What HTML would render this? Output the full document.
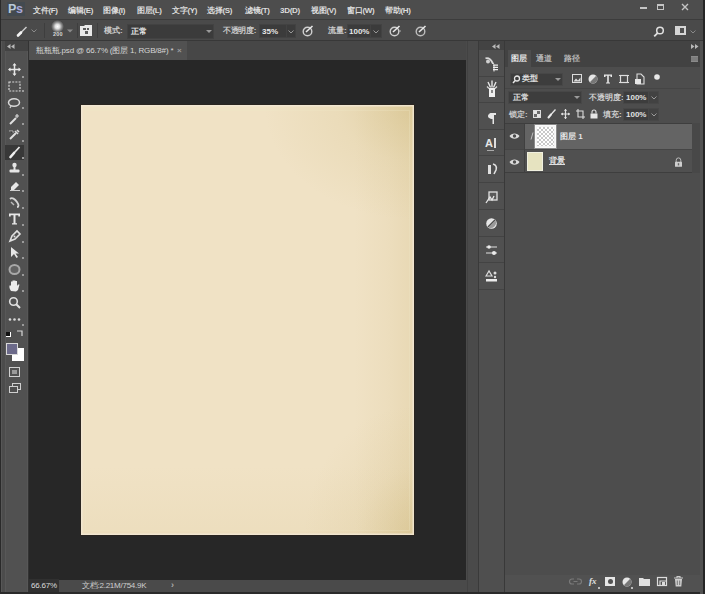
<!DOCTYPE html>
<html><head><meta charset="utf-8">
<style>
*{margin:0;padding:0;box-sizing:border-box}
html,body{width:705px;height:594px;overflow:hidden;background:#474747;font-family:"Liberation Sans",sans-serif;color:#cfcfcf;font-size:8px}
.a{position:absolute}
.t{position:absolute;white-space:nowrap;line-height:1;font-weight:bold}
svg{position:absolute;overflow:visible}
.mi{position:absolute;top:5.5px;font-size:8px;line-height:10px;color:#dcdcdc;white-space:nowrap;font-weight:bold;letter-spacing:-0.3px}
.box{position:absolute;background:#3b3b3b;border:1px solid #424242}
</style></head><body>
<!-- ===== MENU BAR ===== -->
<div class="a" style="left:0;top:0;width:705px;height:19px;background:#4d4d4d"></div>
<div class="a" style="left:0;top:19px;width:705px;height:1px;background:#3c3c3c"></div>
<div class="a" style="left:4px;top:2px;width:20px;height:16px;background:#1f3550;opacity:.0"></div>
<div class="a" style="left:7px;top:2px;width:18px;height:14px;background:#434a50"></div><div class="t" style="left:8px;top:3px;font-size:12.5px;font-weight:bold;color:#b8c8d8;letter-spacing:-0.3px">P<span style="color:#a8a8d8">s</span></div>
<div class="mi" style="left:33px">文件(F)</div>
<div class="mi" style="left:68px">编辑(E)</div>
<div class="mi" style="left:103px">图像(I)</div>
<div class="mi" style="left:137px">图层(L)</div>
<div class="mi" style="left:172px">文字(Y)</div>
<div class="mi" style="left:207px">选择(S)</div>
<div class="mi" style="left:245px">滤镜(T)</div>
<div class="mi" style="left:280px">3D(D)</div>
<div class="mi" style="left:311px">视图(V)</div>
<div class="mi" style="left:347px">窗口(W)</div>
<div class="mi" style="left:385px">帮助(H)</div>
<!-- window controls -->
<div class="a" style="left:640px;top:7px;width:7px;height:2px;background:#c4c4c4"></div>
<div class="a" style="left:657px;top:4px;width:7px;height:6px;border:1px solid #c4c4c4;border-top-width:2px"></div>
<svg style="left:681px;top:3px" width="8" height="8"><path d="M1 1L7 7M7 1L1 7" stroke="#c4c4c4" stroke-width="1.4"/></svg>

<!-- ===== OPTIONS BAR ===== -->
<div class="a" style="left:0;top:20px;width:705px;height:20px;background:#4a4a4a"></div>
<div class="a" style="left:0;top:40px;width:705px;height:1px;background:#383838"></div>
<!-- brush icon -->
<svg style="left:16px;top:26px" width="12" height="11"><path d="M10.5 1L5.5 6" stroke="#cfcfcf" stroke-width="1.5"/><path d="M5 6.5L2 9.5" stroke="#f4f4f4" stroke-width="2.6" stroke-linecap="round"/></svg>
<svg style="left:31px;top:29px" width="6" height="4"><path d="M0.5 0.5L3 3L5.5 0.5" stroke="#8a8a8a" fill="none"/></svg>
<div class="a" style="left:44px;top:23px;width:1px;height:15px;background:#3e3e3e"></div>
<div class="a" style="left:51px;top:20px;width:13px;height:13px;border-radius:50%;background:radial-gradient(circle at 50% 50%,#ffffff 0,#dddddd 25%,rgba(190,190,190,.55) 48%,rgba(74,74,74,0) 70%)"></div>
<div class="t" style="left:53px;top:32px;font-size:5.5px;font-weight:bold;color:#d8d8d8;letter-spacing:0.2px">200</div>
<svg style="left:67px;top:29px" width="6" height="4"><path d="M0 0.5H6L3 3.5Z" fill="#8a8a8a"/></svg>
<div class="a" style="left:77px;top:23px;width:1px;height:15px;background:#3e3e3e"></div>
<svg style="left:80px;top:25px" width="12" height="11"><path d="M0 1H4L5 0H12V11H0Z" fill="#e8e8e8"/><path d="M3 3H6V5H3ZM7 3H9V5H7ZM5 6H8V9H5Z" fill="#5a5a5a"/></svg>
<div class="a" style="left:97px;top:23px;width:1px;height:15px;background:#3e3e3e"></div>
<div class="t" style="left:104px;top:27px;color:#cacaca;font-weight:bold">模式:</div>
<div class="box" style="left:127px;top:24px;width:87px;height:15px"></div>
<div class="t" style="left:131px;top:28px;color:#e6e6e6;font-weight:bold">正常</div>
<svg style="left:206px;top:30px" width="6" height="4"><path d="M0 0H6L3 3Z" fill="#9a9a9a"/></svg>
<div class="t" style="left:223px;top:27px;color:#cacaca;font-weight:bold;letter-spacing:-0.3px">不透明度:</div>
<div class="box" style="left:259px;top:24px;width:28px;height:14px"></div>
<div class="box" style="left:286px;top:24px;width:10px;height:14px"></div>
<div class="t" style="left:262px;top:28px;color:#e6e6e6;font-size:8px">35%</div>
<svg style="left:288px;top:30px" width="6" height="4"><path d="M0.5 0.5L3 3L5.5 0.5" stroke="#9a9a9a" fill="none"/></svg>
<!-- pressure icon -->
<svg style="left:302px;top:25px" width="12" height="12"><circle cx="5.5" cy="6.5" r="4.3" stroke="#cfcfcf" stroke-width="1.4" fill="none"/><path d="M4 7L10.5 1" stroke="#e8e8e8" stroke-width="1.6"/></svg>
<div class="t" style="left:328px;top:27px;color:#cacaca;font-weight:bold">流量:</div>
<div class="box" style="left:347px;top:24px;width:24px;height:14px"></div>
<div class="box" style="left:370px;top:24px;width:12px;height:14px"></div>
<div class="t" style="left:349px;top:28px;color:#e6e6e6;font-size:8px">100%</div>
<svg style="left:373px;top:30px" width="6" height="4"><path d="M0.5 0.5L3 3L5.5 0.5" stroke="#9a9a9a" fill="none"/></svg>

<svg style="left:389px;top:25px" width="13" height="12"><circle cx="5.5" cy="6.5" r="4.3" stroke="#cfcfcf" stroke-width="1.4" fill="none"/><path d="M4 7L10.5 1" stroke="#e8e8e8" stroke-width="1.6"/><circle cx="11" cy="6" r="0.8" fill="#bbb"/></svg>

<svg style="left:415px;top:25px" width="12" height="12"><circle cx="5.5" cy="6.5" r="4.3" stroke="#bdbdbd" stroke-width="1.4" fill="none"/><path d="M4 7L10.5 1" stroke="#e8e8e8" stroke-width="1.6"/></svg>
<!-- right search/workspace -->
<svg style="left:653px;top:26px" width="12" height="12"><circle cx="7" cy="4.5" r="3.3" stroke="#e0e0e0" stroke-width="1.5" fill="none"/><path d="M4.8 6.8L1.2 10.4" stroke="#e0e0e0" stroke-width="1.8"/></svg>
<div class="a" style="left:675px;top:26px;width:11px;height:9px;border:2px solid #d6d6d6;background:#505050"></div>
<div class="a" style="left:677px;top:28px;width:3px;height:5px;background:#d6d6d6"></div>
<svg style="left:690px;top:30px" width="6" height="4"><path d="M0.5 0.5L3 3L5.5 0.5" stroke="#8a8a8a" fill="none"/></svg>

<!-- ===== LEFT FRAME + TOOLBAR ===== -->
<div class="a" style="left:0;top:0;width:1px;height:594px;background:#2a2a2a"></div>
<div class="a" style="left:1px;top:41px;width:4px;height:553px;background:#4c4c4c"></div>
<div class="a" style="left:1px;top:41px;width:1px;height:553px;background:#575757"></div>
<div class="a" style="left:5px;top:41px;width:23px;height:553px;background:#515151"></div>
<div class="a" style="left:5px;top:41px;width:1px;height:553px;background:#585858"></div>
<div class="a" style="left:27px;top:41px;width:1px;height:553px;background:#575757"></div>
<div class="a" style="left:5px;top:41px;width:23px;height:10px;background:#434343"></div>
<svg style="left:7px;top:44px" width="8" height="5"><path d="M0 2.5L3.5 0V5ZM4 2.5L7.5 0V5Z" fill="#b8b8b8"/></svg>
<div class="a" style="left:28px;top:41px;width:1px;height:553px;background:#333"></div>
<!-- selected brush highlight -->
<div class="a" style="left:5px;top:145px;width:19px;height:15px;background:#383838"></div>
<!-- tools -->
<svg style="left:8px;top:63px" width="13" height="13"><path d="M6.5 1V12M1 6.5H12" stroke="#e6e6e6" stroke-width="1.5"/><path d="M6.5 0L4.5 2.5H8.5ZM6.5 13L4.5 10.5H8.5ZM0 6.5L2.5 4.5V8.5ZM13 6.5L10.5 4.5V8.5Z" fill="#e6e6e6"/></svg>
<svg style="left:8px;top:81px" width="13" height="11"><rect x="1" y="1" width="11" height="9" stroke="#d8d8d8" stroke-width="1.2" stroke-dasharray="2 1.2" fill="none"/></svg>
<svg style="left:7px;top:97px" width="14" height="12"><ellipse cx="7" cy="5.5" rx="5.5" ry="3.8" stroke="#d8d8d8" stroke-width="1.5" fill="none"/><path d="M4 9L3 11" stroke="#d0d0d0" stroke-width="1.2"/></svg>
<svg style="left:8px;top:113px" width="13" height="12"><path d="M2 11L8 5" stroke="#e0e0e0" stroke-width="2"/><path d="M9 1V5M7 3H11" stroke="#d8d8d8" stroke-width="1.2"/></svg>
<svg style="left:8px;top:129px" width="13" height="12"><path d="M2 10L8 4" stroke="#e0e0e0" stroke-width="2"/><path d="M7 2L10 5M9 1L11 3" stroke="#d8d8d8" stroke-width="1.6"/><path d="M1 2H5V4" stroke="#bbb" stroke-width="1"/></svg>
<svg style="left:8px;top:146px" width="13" height="13"><path d="M11.5 1L6 7" stroke="#e6e6e6" stroke-width="1.8"/><path d="M6 7L2.5 11" stroke="#f0f0f0" stroke-width="2.6" stroke-linecap="round"/></svg>
<svg style="left:8px;top:162px" width="13" height="13"><circle cx="6.5" cy="3" r="2.2" fill="#e6e6e6"/><path d="M6.5 4V8" stroke="#e6e6e6" stroke-width="2"/><rect x="1.5" y="7.5" width="10" height="3" rx="1" fill="#e6e6e6"/></svg>
<svg style="left:8px;top:179px" width="13" height="13"><path d="M3 8L8 3L11 6L6 11H3Z" fill="#e6e6e6"/><path d="M2 11.5H12" stroke="#cfcfcf" stroke-width="1"/></svg>
<svg style="left:8px;top:196px" width="13" height="13"><path d="M2 3C4 1 7 3 9 6S11 11 9 11" stroke="#d6d6d6" stroke-width="1.8" fill="none"/><path d="M3 6L6 9" stroke="#bbb" stroke-width="1.4"/></svg>
<svg style="left:9px;top:213px" width="11" height="12"><path d="M0 0.5H11V3.5H9.3V2.2H6.5V10.3H8V11.5H3V10.3H4.5V2.2H1.7V3.5H0Z" fill="#e8e8e8"/></svg>
<svg style="left:8px;top:230px" width="13" height="13"><path d="M2 11L4 6L9 1L12 4L7 9Z" stroke="#e0e0e0" stroke-width="1.6" fill="none"/><circle cx="6.5" cy="6.5" r="1" fill="#e0e0e0"/></svg>
<svg style="left:9px;top:246px" width="12" height="13"><path d="M2 1L2 11L5 8L7.5 12L9 11L6.5 7.5L10 7.5Z" fill="#e6e6e6"/></svg>
<svg style="left:8px;top:263px" width="13" height="13"><ellipse cx="6.5" cy="6.5" rx="5" ry="4.5" stroke="#a8a8a8" stroke-width="2" fill="#626262"/></svg>
<svg style="left:8px;top:279px" width="13" height="13"><path d="M3 12C1 9 1 7 2 6L3 7V2.5H4.5V6V1.5H6V6V1.5H7.5V6V2H9V7L10 5.5H11.5L10 11L8 12.5Z" fill="#ececec"/></svg>
<svg style="left:8px;top:296px" width="13" height="13"><circle cx="5.5" cy="5.5" r="3.8" stroke="#e0e0e0" stroke-width="1.6" fill="none"/><path d="M8.3 8.3L12 12" stroke="#e0e0e0" stroke-width="2"/></svg>
<svg style="left:8px;top:317px" width="13" height="5"><circle cx="2" cy="2.5" r="1.3" fill="#d8d8d8"/><circle cx="6.5" cy="2.5" r="1.3" fill="#d8d8d8"/><circle cx="11" cy="2.5" r="1.3" fill="#d8d8d8"/></svg>
<div class="a" style="left:22px;top:76px;width:2px;height:2px;background:#9a9a9a"></div><div class="a" style="left:22px;top:90px;width:2px;height:2px;background:#9a9a9a"></div><div class="a" style="left:22px;top:107px;width:2px;height:2px;background:#9a9a9a"></div><div class="a" style="left:22px;top:123px;width:2px;height:2px;background:#9a9a9a"></div><div class="a" style="left:22px;top:140px;width:2px;height:2px;background:#9a9a9a"></div><div class="a" style="left:22px;top:157px;width:2px;height:2px;background:#9a9a9a"></div><div class="a" style="left:22px;top:174px;width:2px;height:2px;background:#9a9a9a"></div><div class="a" style="left:22px;top:190px;width:2px;height:2px;background:#9a9a9a"></div><div class="a" style="left:22px;top:207px;width:2px;height:2px;background:#9a9a9a"></div><div class="a" style="left:22px;top:224px;width:2px;height:2px;background:#9a9a9a"></div><div class="a" style="left:22px;top:241px;width:2px;height:2px;background:#9a9a9a"></div><div class="a" style="left:22px;top:257px;width:2px;height:2px;background:#9a9a9a"></div><div class="a" style="left:22px;top:274px;width:2px;height:2px;background:#9a9a9a"></div><div class="a" style="left:22px;top:290px;width:2px;height:2px;background:#9a9a9a"></div><div class="a" style="left:22px;top:324px;width:2px;height:2px;background:#9a9a9a"></div>
<!-- default/swap colors -->
<div class="a" style="left:6px;top:332px;width:5px;height:5px;background:#fff"></div>
<div class="a" style="left:6px;top:332px;width:4px;height:4px;background:#111"></div>
<svg style="left:16px;top:330px" width="8" height="8"><path d="M1 1H6V6" stroke="#d8d8d8" stroke-width="1.2" fill="none"/></svg>
<!-- fg/bg -->
<div class="a" style="left:12px;top:348px;width:12px;height:13px;background:#fff"></div>
<div class="a" style="left:6px;top:343px;width:12px;height:12px;background:#6c6a8a;border:1px solid #d8d8d8"></div>
<!-- quick mask -->
<div class="a" style="left:9px;top:367px;width:11px;height:10px;border:1px solid #cfcfcf"></div>
<div class="a" style="left:12px;top:370px;width:5px;height:4px;background:#9a9a9a"></div>
<!-- screen mode -->
<div class="a" style="left:12px;top:383px;width:9px;height:7px;border:1px solid #cfcfcf"></div>
<div class="a" style="left:9px;top:386px;width:9px;height:7px;border:1px solid #cfcfcf;background:#4f4f4f"></div>

<!-- ===== DOC TAB ===== -->
<div class="a" style="left:29px;top:41px;width:437px;height:19px;background:#474747"></div>
<div class="a" style="left:29px;top:41px;width:158px;height:19px;background:#515151"></div>
<div class="t" style="left:36px;top:47px;color:#d6d6d6;font-size:8px;letter-spacing:-0.17px;font-weight:normal">瓶瓶瓶.psd @ 66.7% (图层 1, RGB/8#) *</div>
<div class="t" style="left:177px;top:47px;color:#9a9a9a;font-size:8px">×</div>

<!-- ===== CANVAS ===== -->
<div class="a" style="left:29px;top:60px;width:437px;height:520px;background:#272727"></div>
<div class="a" style="left:80px;top:104px;width:335px;height:432px;background:#2a2520"></div>
<div class="a" style="left:81px;top:105px;width:333px;height:430px;background:
radial-gradient(ellipse 150px 115px at 100% 0%,rgba(195,172,100,.36),rgba(195,172,100,.12) 50%,rgba(195,172,100,0) 100%),
radial-gradient(ellipse 110px 130px at 100% 100%,rgba(190,165,90,.26),rgba(190,165,90,.08) 50%,rgba(190,165,90,0) 100%),
linear-gradient(to right,rgba(195,170,100,0) 82%,rgba(195,170,100,.08) 92%,rgba(195,170,100,.18) 100%),
linear-gradient(to bottom,rgba(195,170,100,0) 84%,rgba(195,170,100,.08) 100%),
#f0e2c5;box-shadow:inset 0 0 0 1.5px rgba(242,232,214,.8)"></div>
<div class="a" style="left:85px;top:110px;width:325px;height:421px;border:1px solid rgba(240,232,200,.3)"></div>

<!-- ===== STATUS ===== -->
<div class="a" style="left:29px;top:580px;width:437px;height:12px;background:#4a4a4a"></div>
<div class="a" style="left:29px;top:579px;width:30px;height:13px;background:#303030"></div>
<div class="t" style="left:31px;top:582px;font-size:8px;color:#dcdcdc;font-weight:normal;letter-spacing:-0.2px">66.67%</div>
<div class="t" style="left:82px;top:582px;font-size:8px;color:#cfcfcf;letter-spacing:-0.25px;font-weight:normal">文档:2.21M/754.9K</div>
<div class="t" style="left:171px;top:581px;font-size:9px;color:#aaa">›</div>
<div class="a" style="left:0;top:592px;width:705px;height:2px;background:#2a2a2a"></div>

<!-- ===== STRIP ===== -->
<div class="a" style="left:466px;top:41px;width:13px;height:551px;background:#4a4a4a"></div>
<div class="a" style="left:467px;top:41px;width:1px;height:551px;background:#424242"></div>
<div class="a" style="left:478px;top:41px;width:1px;height:551px;background:#3a3a3a"></div>

<!-- ===== ICON COLUMN ===== -->
<div class="a" style="left:479px;top:41px;width:25px;height:551px;background:#4f4f4f"></div>
<div class="a" style="left:479px;top:41px;width:25px;height:9px;background:#434343"></div>
<svg style="left:492px;top:44px" width="8" height="5"><path d="M0 2.5L3.5 0V5ZM4 2.5L7.5 0V5Z" fill="#b8b8b8"/></svg>
<div class="a" style="left:504px;top:41px;width:1px;height:551px;background:#393939"></div>

<!-- ===== ICON COLUMN ICONS ===== -->
<div class="a" style="left:479px;top:50px;width:25px;height:239px;background:#505050"></div>
<div class="a" style="left:479px;top:76px;width:25px;height:1px;background:#434343"></div>
<div class="a" style="left:479px;top:102px;width:25px;height:1px;background:#434343"></div>
<div class="a" style="left:479px;top:129px;width:25px;height:1px;background:#434343"></div>
<div class="a" style="left:479px;top:155px;width:25px;height:1px;background:#434343"></div>
<div class="a" style="left:479px;top:182px;width:25px;height:1px;background:#434343"></div>
<div class="a" style="left:479px;top:209px;width:25px;height:1px;background:#434343"></div>
<div class="a" style="left:479px;top:236px;width:25px;height:1px;background:#434343"></div>
<div class="a" style="left:479px;top:262px;width:25px;height:1px;background:#434343"></div>
<div class="a" style="left:479px;top:289px;width:25px;height:1px;background:#434343"></div>
<!-- 1 history -->
<svg style="left:484px;top:57px" width="15" height="16"><path d="M1.5 1.5C3 0.5 6 1.5 7.5 4L9.5 7.5" stroke="#d8d8d8" stroke-width="1.8" fill="none"/><circle cx="4" cy="4.5" r="2" fill="#cfcfcf"/><rect x="8" y="7" width="6.5" height="8" fill="#4f4f4f"/><path d="M9 8.2H14M9 10.4H14M9 12.6H14" stroke="#ececec" stroke-width="1.2"/><path d="M10 7.5V14.5" stroke="#ececec" stroke-width="1"/></svg>
<!-- 2 brush presets -->
<svg style="left:486px;top:80px" width="12" height="19"><path d="M2 2L4.5 7.5M6 0.5V7.5M10 2L7.5 7.5" stroke="#e6e6e6" stroke-width="1.4"/><path d="M1 6.5L3 8.5M11 6.5L9 8.5" stroke="#ddd" stroke-width="1.2"/><rect x="3" y="8" width="6" height="9" fill="#f0f0f0"/><rect x="5" y="10" width="2" height="3" fill="#8a8a8a"/></svg>
<!-- 3 paragraph -->
<svg style="left:487px;top:112px" width="10" height="12"><path d="M2 1H9V3H7V12H5.5V3" fill="#e6e6e6"/><path d="M6 1C2 1 1 3 1 4S2 7 6 7" fill="#e6e6e6"/></svg>
<!-- 4 A| -->
<div class="t" style="left:485px;top:138px;font-size:11px;font-weight:bold;color:#e6e6e6">A</div>
<div class="a" style="left:494px;top:138px;width:1.5px;height:10px;background:#ddd"></div>
<div class="a" style="left:487px;top:150px;width:7px;height:1px;background:#aaa"></div>
<!-- 5 -->
<svg style="left:486px;top:163px" width="12" height="13"><path d="M2 2H5V11H2Z" fill="#e0e0e0"/><path d="M7 1C10 2 11 4 10 7L8 11" stroke="#e0e0e0" stroke-width="1.6" fill="none"/></svg>
<!-- 6 -->
<svg style="left:485px;top:191px" width="13" height="13"><rect x="4" y="1" width="8" height="8" stroke="#e0e0e0" stroke-width="1.3" fill="#5a5a5a"/><path d="M1 12L5 6L7 9L9 5" stroke="#e6e6e6" stroke-width="1.3" fill="none"/></svg>
<!-- 7 adjust circle -->
<svg style="left:485px;top:217px" width="13" height="13"><circle cx="6.5" cy="6.5" r="5.3" fill="#e6e6e6"/><path d="M3 10L10 3" stroke="#4f4f4f" stroke-width="1.6"/><path d="M10.5 3.5A5.3 5.3 0 0 1 3.5 10.5Z" fill="#9a9a9a"/></svg>
<!-- 8 sliders -->
<svg style="left:485px;top:244px" width="13" height="12"><path d="M1 3H12M1 9H12" stroke="#e0e0e0" stroke-width="1.2"/><circle cx="4" cy="3" r="1.8" fill="#ececec"/><circle cx="9" cy="9" r="2" fill="#ececec"/></svg>
<!-- 9 -->
<svg style="left:485px;top:270px" width="13" height="13"><path d="M1 6L4 1L7 6Z" fill="none" stroke="#ddd" stroke-width="1.2"/><circle cx="10" cy="3" r="1.5" fill="#ddd"/><circle cx="10" cy="7" r="1.2" fill="#ddd"/><rect x="1" y="9" width="11" height="2.5" fill="#ececec"/></svg>

<!-- ===== LAYERS PANEL ===== -->
<div class="a" style="left:505px;top:41px;width:195px;height:551px;background:#4d4d4d"></div>
<div class="a" style="left:505px;top:41px;width:195px;height:9px;background:#434343"></div>
<svg style="left:691px;top:44px" width="8" height="5"><path d="M3.5 2.5L0 0V5ZM7.5 2.5L4 0V5Z" fill="#b8b8b8"/></svg>
<div class="a" style="left:700px;top:41px;width:3px;height:553px;background:#525252"></div>
<div class="a" style="left:703px;top:0px;width:2px;height:594px;background:#262626"></div>
<!-- tab bar -->
<div class="a" style="left:505px;top:50px;width:195px;height:17px;background:#424242"></div>
<div class="a" style="left:508px;top:50px;width:23px;height:17px;background:#4d4d4d"></div>
<div class="t" style="left:511px;top:55px;color:#e8e8e8">图层</div>
<div class="t" style="left:536px;top:55px;color:#b8b8b8">通道</div>
<div class="t" style="left:564px;top:55px;color:#b8b8b8">路径</div>
<div class="a" style="left:691px;top:56px;width:7px;height:6px;background:#8a8a8a"></div><svg style="left:691px;top:56px" width="7" height="6"><path d="M0 2H7M0 4H7" stroke="#6a6a6a" stroke-width="0.8"/></svg>
<!-- filter row -->
<div class="box" style="left:510px;top:73px;width:53px;height:13px;background:#3d3d3d;border-color:#474747"></div>
<svg style="left:512px;top:75px" width="8" height="9"><circle cx="5" cy="3.5" r="2.5" stroke="#e6e6e6" stroke-width="1.3" fill="none"/><path d="M3.2 5.5L1 8" stroke="#e6e6e6" stroke-width="1.5"/></svg>
<div class="t" style="left:522px;top:75px;color:#e0e0e0">类型</div>
<svg style="left:555px;top:78px" width="6" height="4"><path d="M0 0H6L3 3Z" fill="#9a9a9a"/></svg>
<svg style="left:572px;top:74px" width="10" height="10"><rect x="0.5" y="0.5" width="9" height="8" stroke="#ddd" fill="none"/><path d="M1.5 7.5L4 4.5L6 6.5L8.5 3.5V7.5Z" fill="#ddd"/></svg>
<svg style="left:588px;top:74px" width="10" height="10"><circle cx="5" cy="5" r="4.5" fill="#e6e6e6"/><path d="M8.2 1.8A4.5 4.5 0 0 1 1.8 8.2Z" fill="#777"/></svg>
<svg style="left:604px;top:74px" width="8" height="10"><path d="M0 0.5H8V3H6.5V1.8H4.8V8.5H6V9.5H2V8.5H3.2V1.8H1.5V3H0Z" fill="#e6e6e6"/></svg>
<svg style="left:619px;top:74px" width="10" height="10"><rect x="1.5" y="1.5" width="7" height="7" stroke="#ddd" stroke-width="1.2" fill="none"/><path d="M0 1.5H1.5M8.5 1.5H10M0 8.5H1.5M8.5 8.5H10" stroke="#ddd"/></svg>
<svg style="left:634px;top:73px" width="11" height="12"><path d="M3 1H7L10 4V11H3Z" stroke="#ddd" stroke-width="1.1" fill="none"/><rect x="1" y="6" width="6" height="5" fill="#e6e6e6"/></svg>
<svg style="left:653px;top:73px" width="8" height="8"><circle cx="4" cy="4" r="2.8" fill="#e8e8e8"/></svg>
<div class="a" style="left:505px;top:88px;width:195px;height:1px;background:#454545"></div>
<!-- blend row -->
<div class="box" style="left:508px;top:91px;width:74px;height:13px;background:#3d3d3d;border-color:#474747"></div>
<div class="t" style="left:513px;top:94px;color:#e0e0e0">正常</div>
<svg style="left:574px;top:96px" width="6" height="4"><path d="M0 0H6L3 3Z" fill="#9a9a9a"/></svg>
<div class="t" style="left:589px;top:94px;color:#d0d0d0">不透明度:</div>
<div class="box" style="left:623px;top:91px;width:26px;height:13px;background:#3d3d3d;border-color:#474747"></div>
<div class="box" style="left:648px;top:91px;width:11px;height:13px;background:#424242;border-color:#474747"></div>
<div class="t" style="left:626px;top:94px;color:#e0e0e0;font-size:8px">100%</div>
<svg style="left:651px;top:96px" width="6" height="4"><path d="M0.5 0.5L3 3L5.5 0.5" stroke="#9a9a9a" fill="none"/></svg>
<!-- lock row -->
<div class="t" style="left:509px;top:111px;color:#c8c8c8">锁定:</div>
<svg style="left:533px;top:110px" width="8" height="8"><rect x="0.5" y="0.5" width="7" height="7" stroke="#ddd" fill="#6a6a6a"/><path d="M1 1H4V4H1ZM4 4H7V7H4Z" fill="#e6e6e6"/></svg>
<svg style="left:547px;top:109px" width="9" height="10"><path d="M8.5 0.5L4 5.5" stroke="#e6e6e6" stroke-width="1.3"/><path d="M4 5.5L1.5 8.5" stroke="#eee" stroke-width="2" stroke-linecap="round"/></svg>
<svg style="left:561px;top:109px" width="9" height="10"><path d="M4.5 0V10M0 5H9" stroke="#e0e0e0" stroke-width="1.2"/><path d="M4.5 0L3 2H6ZM4.5 10L3 8H6ZM0 5L2 3.5V6.5ZM9 5L7 3.5V6.5Z" fill="#e0e0e0"/></svg>
<svg style="left:576px;top:109px" width="9" height="10"><path d="M2 0V8H9M0 2H7V10" stroke="#ddd" stroke-width="1.1" fill="none"/></svg>
<svg style="left:590px;top:109px" width="8" height="10"><path d="M2 4.5V3A2 2 0 0 1 6 3V4.5" stroke="#ddd" stroke-width="1.1" fill="none"/><rect x="0.5" y="4.5" width="7" height="5" fill="#e6e6e6"/></svg>
<div class="t" style="left:603px;top:111px;color:#d0d0d0">填充:</div>
<div class="box" style="left:623px;top:108px;width:26px;height:13px;background:#3d3d3d;border-color:#474747"></div>
<div class="box" style="left:648px;top:108px;width:11px;height:13px;background:#424242;border-color:#474747"></div>
<div class="t" style="left:626px;top:111px;color:#e0e0e0;font-size:8px">100%</div>
<svg style="left:651px;top:113px" width="6" height="4"><path d="M0.5 0.5L3 3L5.5 0.5" stroke="#9a9a9a" fill="none"/></svg>
<!-- layers list -->
<div class="a" style="left:505px;top:123px;width:187px;height:1px;background:#3e3e3e"></div>
<div class="a" style="left:525px;top:124px;width:167px;height:25px;background:#646464"></div>
<div class="a" style="left:505px;top:149px;width:187px;height:1px;background:#454545"></div>
<div class="a" style="left:505px;top:124px;width:20px;height:25px;background:#4a4a4a"></div>
<div class="a" style="left:505px;top:150px;width:187px;height:22px;background:#505050"></div>
<div class="a" style="left:505px;top:172px;width:187px;height:1px;background:#3e3e3e"></div>
<div class="a" style="left:524px;top:124px;width:1px;height:49px;background:#404040"></div>
<svg style="left:509px;top:132px" width="11" height="8"><path d="M0.5 4C2.5 0.5 8.5 0.5 10.5 4C8.5 7.5 2.5 7.5 0.5 4Z" fill="#dcdcdc"/><circle cx="5.5" cy="4" r="1.7" fill="#4a4a4a"/></svg>
<svg style="left:509px;top:158px" width="11" height="8"><path d="M0.5 4C2.5 0.5 8.5 0.5 10.5 4C8.5 7.5 2.5 7.5 0.5 4Z" fill="#dcdcdc"/><circle cx="5.5" cy="4" r="1.7" fill="#4f4f4f"/></svg>
<svg style="left:530px;top:132px" width="4" height="8"><path d="M3 0.5L1 7.5" stroke="#bdbdbd" stroke-width="1"/></svg>
<div class="a" style="left:535px;top:125px;width:21px;height:23px;background:#f4f4f4;border:1px solid #fafafa"></div>
<div class="a" style="left:537px;top:127px;width:17px;height:19px;background-color:#fff;background-image:linear-gradient(45deg,#c8c8c8 25%,transparent 25%,transparent 75%,#c8c8c8 75%),linear-gradient(45deg,#c8c8c8 25%,transparent 25%,transparent 75%,#c8c8c8 75%);background-size:4px 4px;background-position:0 0,2px 2px"></div>
<div class="a" style="left:534px;top:124px;width:23px;height:25px;border:1px solid #8a8a8a"></div>
<div class="t" style="left:560px;top:133px;color:#e6e6e6">图层 1</div>
<div class="a" style="left:527px;top:152px;width:16px;height:19px;background:#e6e3c0;border:1px solid #f0f0e0"></div>
<div class="t" style="left:549px;top:157px;color:#e0e0e0;text-decoration:underline">背景</div>
<svg style="left:674px;top:157px" width="9" height="10"><path d="M2.2 5V3.2A2.3 2.3 0 0 1 6.8 3.2V5" stroke="#bbb" stroke-width="1" fill="none"/><rect x="1" y="4.8" width="7" height="5" rx="0.5" fill="#cfcfcf"/><rect x="3.8" y="6.2" width="1.4" height="2.2" fill="#666"/></svg>
<div class="a" style="left:692px;top:123px;width:8px;height:50px;background:#484848"></div>
<!-- bottom bar -->
<div class="a" style="left:505px;top:575px;width:195px;height:17px;background:#515151"></div>
<svg style="left:570px;top:578px" width="11" height="7"><path d="M4 1H2A2.5 2.5 0 0 0 2 6H4M7 1H9A2.5 2.5 0 0 1 9 6H7M3.5 3.5H7.5" stroke="#7a7a7a" stroke-width="1.2" fill="none"/></svg>
<div class="t" style="left:589px;top:577px;font-size:9px;font-style:italic;color:#e0e0e0;font-family:'Liberation Serif',serif">fx</div>
<div class="a" style="left:598px;top:587px;width:2px;height:2px;background:#bbb"></div>
<div class="a" style="left:605px;top:577px;width:10px;height:9px;background:#e6e6e6"></div>
<div class="a" style="left:607.5px;top:579px;width:5px;height:5px;border-radius:50%;background:#515151"></div>
<svg style="left:622px;top:577px" width="10" height="10"><circle cx="5" cy="5" r="4.5" fill="#e6e6e6"/><path d="M8.2 1.8A4.5 4.5 0 0 1 1.8 8.2Z" fill="#777"/></svg>
<div class="a" style="left:631px;top:587px;width:2px;height:2px;background:#bbb"></div>
<svg style="left:639px;top:577px" width="11" height="9"><path d="M0 1H4L5 2H11V9H0Z" fill="#e0e0e0"/></svg>
<svg style="left:657px;top:577px" width="11" height="10"><rect x="0.5" y="0.5" width="9" height="8" stroke="#ddd" stroke-width="1.2" fill="none"/><path d="M3 8V4H9" stroke="#ddd" stroke-width="1.2" fill="none"/><rect x="5" y="5" width="3" height="3" fill="#ddd"/></svg>
<svg style="left:674px;top:576px" width="9" height="11"><path d="M0 2H9M3 2V0.5H6V2" stroke="#ccc" stroke-width="1.1" fill="none"/><path d="M1 3H8L7.3 10.5H1.7Z" fill="#cfcfcf"/><path d="M3.3 4.5V9M5.7 4.5V9" stroke="#777"/></svg>
</body></html>
